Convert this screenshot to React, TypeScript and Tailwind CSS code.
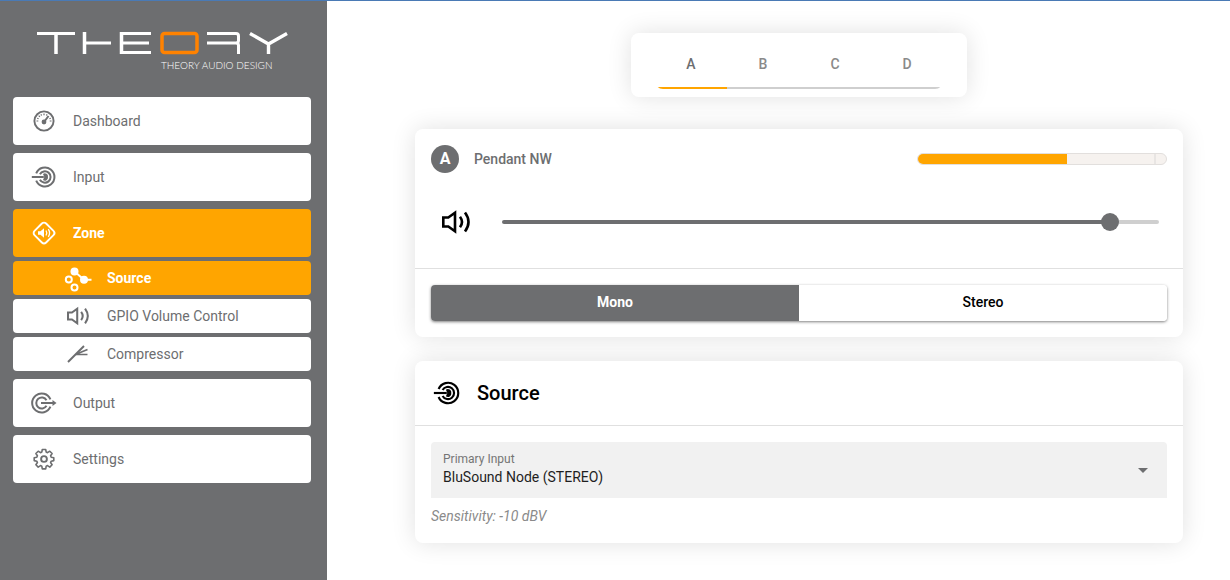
import { useState } from "react";
import type { ReactNode } from "react";
import clsx from "clsx";

const zones = ["A", "B", "C", "D"];

const inputs = ["BluSound Node (STEREO)", "Analog 1", "Analog 2", "Dante 1-2"];

function Logo() {
  return (
    <svg width="252" height="24" viewBox="0 0 252 24" fill="none" stroke="#fff" strokeWidth="3" role="img" aria-label="Theory">
      <path d="M0 2.5h38M47.500 12H74M114 2.500H84M84 21.500h30M84 12h28" />
      <path d="M19 2.500V23M47.500 1v22M84.500 1v22" strokeWidth="3.500" />
      <rect x="125" y="2.500" width="35" height="19" rx="2.500" stroke="#ff8200" strokeWidth="3.500" />
      <path d="M170 2.500h29q2.500 0 2.500 2.500v4.500q0 2.500-2.500 2.500H170M199 12q2.500 0 2.500 2.500V23" />
      <path d="M213 2.500l18.500 10.500 18.500-10.500M231.500 12.500V23" strokeWidth="3.400" />
    </svg>
  );
}

function GaugeIcon() {
  return (
    <svg width="22" height="22" viewBox="0 0 22 22" fill="none" stroke="currentColor" strokeWidth="1.900">
      <circle cx="11" cy="11" r="9.600" />
      <path d="M3.500 11h1.800M16.700 11h1.800M5.700 5.700l1.200 1.200M11 3.500v1.800M8 4.200l.5 1.400M14 4.200l-.5 1.400M4.200 8.200l1.400.5M17.800 8.200l-1.400.5" strokeWidth="1.200" />
      <path d="M11 12l4.500-6" strokeWidth="2" />
      <circle cx="11" cy="12" r="2.400" fill="currentColor" stroke="none" />
    </svg>
  );
}

function InputIcon({ size = 26 }: { size?: number }) {
  return (
    <svg width={size} height={size} viewBox="0 0 26 26" fill="none" stroke="currentColor" strokeWidth="2">
      <path d="M5.200 9.300a9.500 9.500 0 1 1 0 7.400" />
      <path d="M8.900 10.200a5.700 5.700 0 1 1 0 5.600" />
      <path d="M.8 13h12" strokeWidth="2" />
      <path d="M12 9.900a3.200 3.200 0 0 1 5 3.100 3.200 3.200 0 0 1-5 3.100l1.300-3.100z" fill="currentColor" stroke="none" />
    </svg>
  );
}

function OutputIcon() {
  return (
    <svg width="26" height="26" viewBox="0 0 26 26" fill="none" stroke="currentColor" strokeWidth="2">
      <path d="M19.400 9.300a9.500 9.500 0 1 0 0 7.400" />
      <path d="M15.500 10.200a5.500 5.500 0 1 0 0 5.600" />
      <path d="M10 13h13" strokeWidth="2" />
      <path d="M21.500 10l4 3-4 3z" fill="currentColor" stroke="none" />
    </svg>
  );
}

function ZoneIcon() {
  return (
    <svg width="26" height="26" viewBox="0 0 26 26" fill="none" stroke="currentColor" strokeWidth="1.900">
      <rect x="4.800" y="4.800" width="16.400" height="16.400" rx="3" transform="rotate(45 13 13)" />
      <path d="M7 11.200h2.500l3.500-3v9.600l-3.500-3H7z" fill="currentColor" stroke="none" />
      <path d="M15 10.500q1.600 2.500 0 5M17.300 9.200q2.600 3.800 0 7.600" strokeWidth="1.300" />
    </svg>
  );
}

function RoutingIcon() {
  return (
    <svg width="28" height="28" viewBox="0 0 28 28" fill="none" stroke="currentColor" strokeWidth="2">
      <circle cx="10.500" cy="7.500" r="4" fill="currentColor" stroke="none" />
      <circle cx="20" cy="15.700" r="4" fill="currentColor" stroke="none" />
      <path d="M10.500 7.500l9.500 8.200h7.500" />
      <circle cx="4.800" cy="15.500" r="3" />
      <circle cx="10.500" cy="23.500" r="3" />
    </svg>
  );
}

function SpeakerIcon({ size }: { size: number }) {
  return (
    <svg width={size} height={size} viewBox="0 0 28 28" fill="none" stroke="currentColor" strokeWidth="2.600">
      <path d="M1.300 9.500h5L13 4.800v18.400l-6.700-4.700h-5z" />
      <path d="M18 8.700q4 5.300 0 10.600M23 4.500q7 9.500 0 19" />
    </svg>
  );
}

function CompressorIcon() {
  return (
    <svg width="22" height="18" viewBox="0 0 22 18" fill="none" stroke="currentColor" strokeWidth="1.900">
      <path d="M1 17L17 1" />
      <path d="M9 9.300L20.500 4.500M9 9.300l11.500.2" strokeWidth="1.700" />
    </svg>
  );
}

function GearIcon() {
  return (
    <svg width="22" height="22" viewBox="0 0 22 22" fill="none" stroke="currentColor" strokeWidth="1.600" strokeLinejoin="round">
      <path d="M9.300 1.500h3.400l.5 2.600 1.300.6 2.300-1.500 2.300 2.300-1.500 2.300.6 1.400 2.600.5v2.900l-2.600.6-.6 1.300 1.500 2.300-2.300 2.300-2.300-1.500-1.300.6-.5 2.700H9.300l-.5-2.700-1.300-.6-2.300 1.500-2.300-2.300 1.500-2.300-.6-1.300-2.600-.6V9.700l2.600-.5.600-1.400-1.500-2.300 2.300-2.300 2.300 1.500 1.300-.6z" />
      <circle cx="11" cy="11" r="2.900" strokeWidth="1.900" />
    </svg>
  );
}

type NavItemProps = {
  icon: ReactNode;
  label: string;
  active?: boolean;
  sub?: boolean;
};

function NavItem({ icon, label, active, sub }: NavItemProps) {
  return (
    <a
      href="#"
      aria-current={active ? "page" : undefined}
      className={clsx(
        "flex items-center rounded text-sm",
        sub ? "h-[34px] pl-[49px]" : "h-12 pl-[15px]",
        active ? "bg-[#ffa500] font-bold text-white" : "bg-white text-[#6d6e70]"
      )}
    >
      <span className="mr-[13px] flex w-8 shrink-0 justify-center">{icon}</span>
      {label}
    </a>
  );
}

function Sidebar() {
  return (
    <aside className="w-[327px] shrink-0 bg-[#6d6e70] pr-4 pb-6 pl-[13px]">
      <div className="flex h-24 flex-col items-start pt-[30px] pl-6">
        <Logo />
        <span className="ml-[124px] font-[Lato] text-[10px] leading-5 font-light whitespace-nowrap text-white">
          THEORY AUDIO DESIGN
        </span>
      </div>
      <nav className="flex flex-col gap-2">
        <NavItem icon={<GaugeIcon />} label="Dashboard" />
        <NavItem icon={<InputIcon />} label="Input" />
        <div className="flex flex-col gap-1">
          <NavItem icon={<ZoneIcon />} label="Zone" active />
          <NavItem icon={<RoutingIcon />} label="Source" active sub />
          <NavItem icon={<SpeakerIcon size={22} />} label="GPIO Volume Control" sub />
          <NavItem icon={<CompressorIcon />} label="Compressor" sub />
        </div>
        <NavItem icon={<OutputIcon />} label="Output" />
        <NavItem icon={<GearIcon />} label="Settings" />
      </nav>
    </aside>
  );
}

function ZoneTabs({ zone, onChange }: { zone: string; onChange: (zone: string) => void }) {
  return (
    <div className="w-[336px] rounded-lg bg-white px-6 py-2 shadow-[0_0_24px_rgba(0,0,0,0.12)]">
      <div role="tablist" className="flex h-12 overflow-hidden rounded-b-lg">
        {zones.map((z) => (
          <button
            key={z}
            role="tab"
            aria-selected={z === zone}
            onClick={() => onChange(z)}
            className={clsx(
              "flex-1 border-b-2 text-sm font-medium",
              z === zone ? "border-[#ffa500] text-[#6d6e70]" : "border-[#cfcfcf] text-[#8a8a8a]"
            )}
          >
            {z}
          </button>
        ))}
      </div>
    </div>
  );
}

function LevelMeter({ level }: { level: number }) {
  return (
    <div
      role="meter"
      aria-label="Level"
      aria-valuenow={level}
      aria-valuemin={0}
      aria-valuemax={100}
      className="flex h-3 w-[250px] overflow-hidden rounded-full border border-[#e2dfdd] bg-[#f6f2ef]"
    >
      <div className="bg-[#ffa500]" style={{ width: `${level}%` }} />
      <div className="mr-[10px] flex-1 border-r-2 border-[#e8e5e3]" />
    </div>
  );
}

function ZoneCard({ zone }: { zone: string }) {
  const [volume, setVolume] = useState(937);
  const [mode, setMode] = useState("Mono");
  const fill = volume / 10;

  return (
    <section className="w-full rounded-lg bg-white shadow-[0_0_24px_rgba(0,0,0,0.12)]">
      <div className="flex items-center px-4 pt-4">
        <span className="flex size-7 items-center justify-center rounded-full bg-[#6d6e70] font-bold text-white">{zone}</span>
        <h2 className="ml-[15px] flex-1 text-sm font-medium text-[#6d6e70]">Pendant NW</h2>
        <LevelMeter level={60} />
      </div>
      <div className="flex h-24 items-center border-b border-[#e0e0e0] pt-[2px] pr-6 pl-[27px]">
        <button aria-label="Mute" className="mr-8 text-black">
          <SpeakerIcon size={28} />
        </button>
        <input
          type="range"
          aria-label="Volume"
          min={0}
          max={1000}
          value={volume}
          onChange={(e) => setVolume(Number(e.target.value))}
          className="h-1 flex-1 appearance-none rounded-full [&::-webkit-slider-thumb]:size-[18px] [&::-webkit-slider-thumb]:appearance-none [&::-webkit-slider-thumb]:rounded-full [&::-webkit-slider-thumb]:bg-[#6d6e70]"
          style={{ background: `linear-gradient(to right, #6d6e70 ${fill - 1}%, #cfcfcf ${fill - 1}%)` }}
        />
      </div>
      <div className="p-4">
        <div className="flex h-9 overflow-hidden rounded-sm shadow-[0_1px_3px_rgba(0,0,0,0.5)]">
          {["Mono", "Stereo"].map((m) => (
            <button
              key={m}
              aria-pressed={m === mode}
              onClick={() => setMode(m)}
              className={clsx(
                "flex-1 pb-[2px] text-sm",
                m === mode ? "bg-[#6d6e70] font-bold text-white" : "bg-white font-medium text-black"
              )}
            >
              {m}
            </button>
          ))}
        </div>
      </div>
    </section>
  );
}

function SourceCard() {
  return (
    <section className="w-full rounded-lg bg-white shadow-[0_0_24px_rgba(0,0,0,0.12)]">
      <div className="flex h-[65px] items-center border-b border-[#e0e0e0] pl-[18px] text-black">
        <InputIcon size={28} />
        <h2 className="ml-4 text-xl font-medium">Source</h2>
      </div>
      <div className="px-4 pt-4 pb-[17px]">
        <div className="relative">
          <label htmlFor="primary-input" className="absolute top-[9px] left-3 text-xs leading-4 text-[#757575]">
            Primary Input
          </label>
          <select
            id="primary-input"
            className="h-14 w-full appearance-none rounded-t bg-[#f1f1f1] px-3 pt-[14px] text-sm text-[#1f1f1f]"
          >
            {inputs.map((name) => (
              <option key={name}>{name}</option>
            ))}
          </select>
          <svg className="pointer-events-none absolute top-[26px] right-[19px]" width="10" height="5" viewBox="0 0 10 5" fill="#6d6e70">
            <path d="M0 0h10L5 5z" />
          </svg>
        </div>
        <p className="mt-2 text-sm text-[#8a8a8a] italic">Sensitivity: -10 dBV</p>
      </div>
    </section>
  );
}

export default function App() {
  const [zone, setZone] = useState("A");

  return (
    <div className="flex min-h-screen flex-col border-t border-[#4a7ab5] bg-white font-[Roboto,sans-serif]">
      <div className="flex flex-1">
        <Sidebar />
        <main className="flex flex-1 justify-center pt-8 pr-4 pb-6 pl-[57px]">
          <div className="flex w-full max-w-3xl flex-col items-center">
            <ZoneTabs zone={zone} onChange={setZone} />
            <div className="mt-8 flex w-full flex-col gap-6">
              <ZoneCard zone={zone} />
              <SourceCard />
            </div>
          </div>
        </main>
      </div>
    </div>
  );
}
